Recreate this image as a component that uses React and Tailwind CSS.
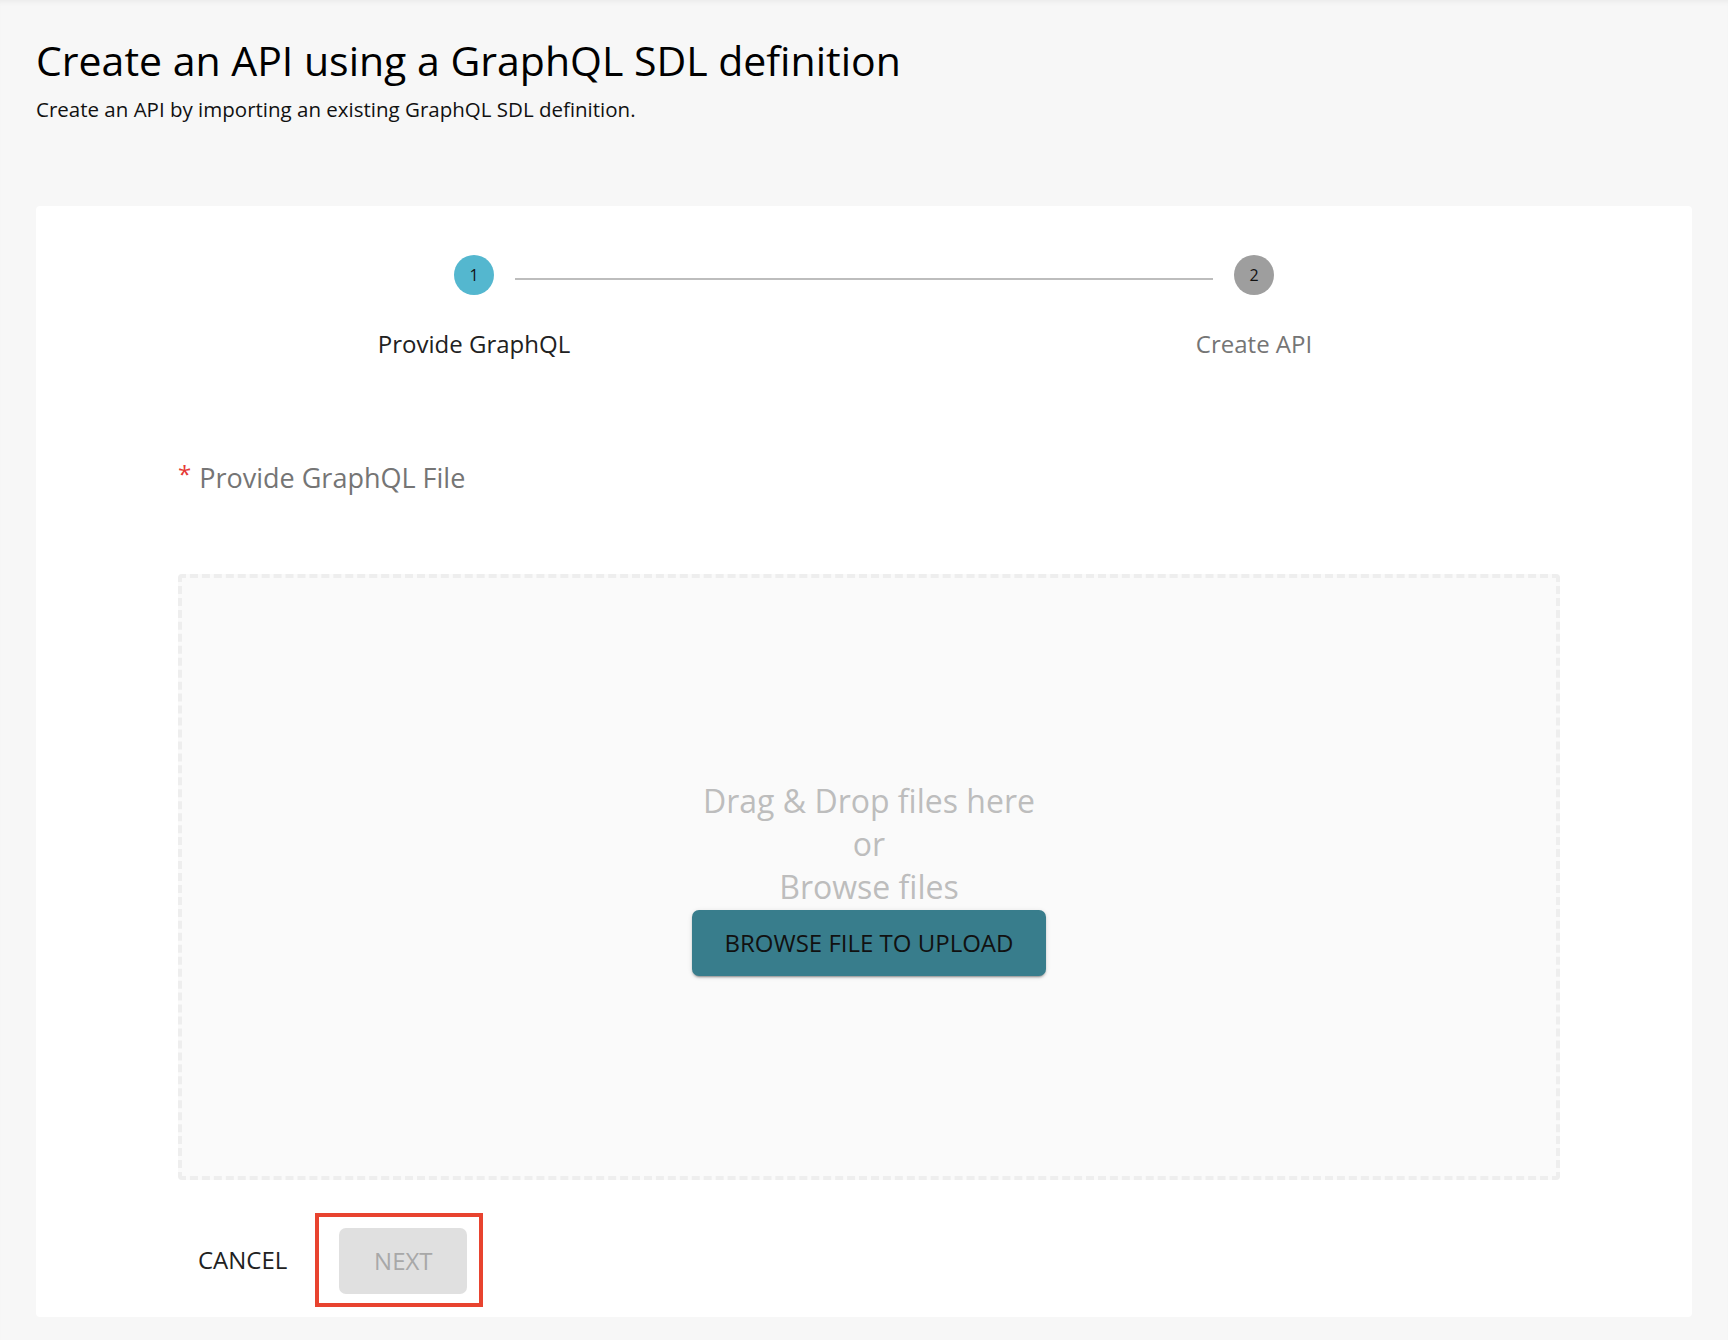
export default function App() {
  const font = { fontFamily: '"Open Sans", "Noto Sans", sans-serif' };

  return (
    <div
      className="min-h-[1340px] bg-[#f7f7f7] px-[36px] pt-[36px] pb-[23px] shadow-[inset_0_5px_5px_-3px_rgba(0,0,0,0.05)]"
      style={font}
    >
      <h1 className="text-[41px] leading-[48px] font-normal text-[#000]">
        Create an API using a GraphQL SDL definition
      </h1>
      <p className="mt-[11px] text-[20.5px] leading-[28px] text-[#111]">
        Create an API by importing an existing GraphQL SDL definition.
      </p>

      <div className="mt-[83px] bg-white rounded-[4px] pt-[49px] pb-[10px]">
        {/* stepper */}
        <div className="flex items-start px-[418px]">
          <div className="w-10 flex flex-col items-center">
            <div className="w-10 h-10 rounded-full bg-[#54b7cf] flex items-center justify-center text-[16px] text-[#111]">
              1
            </div>
            <div className="mt-[33px] whitespace-nowrap text-[24px] leading-[32px] text-[#212121]">
              Provide GraphQL
            </div>
          </div>
          <div className="flex-1 h-[2px] bg-[#bdbdbd] mt-[23px] mx-[21px]" />
          <div className="w-10 flex flex-col items-center">
            <div className="w-10 h-10 rounded-full bg-[#9e9e9e] flex items-center justify-center text-[16px] text-[#111]">
              2
            </div>
            <div className="mt-[33px] whitespace-nowrap text-[24px] leading-[32px] text-[#757575]">
              Create API
            </div>
          </div>
        </div>

        {/* form */}
        <div className="pl-[142px] pr-[132px] mt-[100px]">
          <div className="flex items-start text-[27px] leading-[36px] text-[#757575]">
            <span className="text-[#e53935] text-[24px] leading-[24px] relative top-[2px] mr-[8px]">*</span>
            <span>Provide GraphQL File</span>
          </div>

          <div className="mt-[78px] h-[606px] border-4 border-dashed border-[#eeeeee] bg-[#fafafa] rounded-[4px] flex flex-col items-center justify-center">
            <div className="text-center text-[32px] leading-[43px] text-[#bdbdbd]">
              <div>Drag &amp; Drop files here</div>
              <div>or</div>
              <div>Browse files</div>
            </div>
            <button className="mt-[2px] w-[354px] h-[66px] rounded-[7px] bg-[#387d8c] text-[24px] text-[#111] uppercase shadow-[0_3px_1px_-2px_rgba(0,0,0,0.2),0_2px_2px_0_rgba(0,0,0,0.14),0_1px_5px_0_rgba(0,0,0,0.12)]">
              Browse File to Upload
            </button>
          </div>

          <div className="mt-[33px] flex items-center">
            <button className="ml-[20px] text-[24px] text-[#212121] uppercase">Cancel</button>
            <div className="ml-[28px] border-4 border-[#e8432f] pl-[20px] pr-[12px] pt-[11px] pb-[9px]">
              <button className="w-[128px] h-[66px] rounded-[7px] bg-[#e0e0e0] text-[24px] text-[#a8a8a8] uppercase">
                Next
              </button>
            </div>
          </div>
        </div>
      </div>
    </div>
  );
}
